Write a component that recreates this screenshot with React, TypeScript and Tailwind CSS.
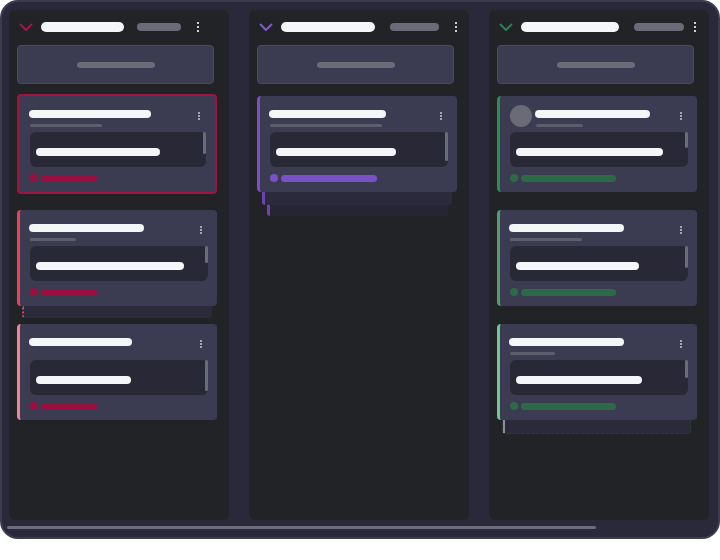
import React from "react";

type CardSpec = {
  accent: string;
  title: number;
  sub?: number;
  body: number;
  thumb: number;
  badge: number;
  badgeColor: string;
  avatar?: boolean;
  selected?: boolean;
  stack?: React.ReactNode;
};

function Dots({ color, gap }: { color: string; gap: string }) {
  return (
    <div className={`flex flex-col ${gap}`}>
      <span className={`block h-[2px] w-[2px] ${color}`} />
      <span className={`block h-[2px] w-[2px] ${color}`} />
      <span className={`block h-[2px] w-[2px] ${color}`} />
    </div>
  );
}

function Card({ c }: { c: CardSpec }) {
  return (
    <div
      className={`relative w-[200px] rounded-[4px] bg-[#3b3b52] pl-[10px] pr-[9px] pt-[14px] pb-[10px] ${
        c.selected ? "-my-[2px] border-2 border-l-[3px]" : "border-l-[3px]"
      } ${c.accent}`}
    >
      {c.stack}
      <div className="flex items-start">
        {c.avatar && (
          <div className="-mt-[5px] mr-[4px] h-[22px] w-[22px] shrink-0 rounded-full bg-[#6b6b78]" />
        )}
        <div className="flex flex-col">
          <div
            className="-ml-px h-[8px] rounded-full bg-[#f5f6f8]"
            style={{ width: c.title }}
          />
          <div
            className={`mt-[6px] h-[3px] rounded-full ${c.sub ? "bg-[#5d5e6d]" : "bg-transparent"}`}
            style={{ width: c.sub ?? 10 }}
          />
        </div>
        <div className="ml-auto mr-[6px] mt-[2px]">
          <Dots color="bg-[#a3a5b3]" gap="gap-px" />
        </div>
      </div>
      <div className="mt-[5px] flex h-[35px] rounded-md bg-[#282837]">
        <div className="flex-1 pl-[6px] pt-[16px]">
          <div className="h-[8px] rounded-full bg-[#f5f6f8]" style={{ width: c.body }} />
        </div>
        <div className="w-[3px] rounded-sm bg-[#686d7a]" style={{ height: c.thumb }} />
      </div>
      <div className="mt-[7px] flex items-center gap-[3px]">
        <span className={`block h-[8px] w-[8px] rounded-full ${c.badgeColor}`} />
        <span className={`block h-[7px] rounded-full ${c.badgeColor}`} style={{ width: c.badge }} />
      </div>
    </div>
  );
}

function Column({
  chevron,
  titleW,
  countW,
  countMl,
  dotsMl,
  cards,
}: {
  chevron: string;
  titleW: number;
  countW: number;
  countMl: string;
  dotsMl: string;
  cards: CardSpec[];
}) {
  return (
    <div className="flex h-[510px] w-[220px] shrink-0 flex-col rounded-[6px] bg-[#222327] pt-[12px] pl-[8px]">
      <div className="flex h-[10px] items-center pl-[2px]">
        <svg width="14" height="8" viewBox="0 0 14 8" className={chevron}>
          <polyline points="1,1 7,7 13,1" fill="none" stroke="currentColor" strokeWidth="2" />
        </svg>
        <div className="ml-[8px] h-[10px] rounded-full bg-[#f5f6f8]" style={{ width: titleW }} />
        <div className={`h-[8px] rounded-full bg-[#6b6b77] ${countMl}`} style={{ width: countW }} />
        <div className={dotsMl}>
          <Dots color="bg-[#cfd1d9]" gap="gap-[2px]" />
        </div>
      </div>
      <div className="mt-[13px] flex h-[39px] w-[197px] items-center justify-center rounded-[4px] border border-[#4b4c63] bg-[#3b3b52]">
        <div className="h-[6px] w-[78px] rounded-full bg-[#6b6b77]" />
      </div>
      <div className="mt-[12px] flex flex-col gap-[18px]">
        {cards.map((c, i) => (
          <Card key={i} c={c} />
        ))}
      </div>
    </div>
  );
}

const red = "bg-[#99103f]";
const purple = "bg-[#7a50c5]";
const green = "bg-[#2c6a47]";

const col1: CardSpec[] = [
  { accent: "border-[#a0123f]", title: 122, sub: 72, body: 124, thumb: 22, badge: 56, badgeColor: red, selected: true },
  {
    accent: "border-[#ee3f5c]",
    title: 115,
    sub: 46,
    body: 148,
    thumb: 17,
    badge: 56,
    badgeColor: red,
    stack: (
      <div className="absolute left-[2px] right-[5px] top-full h-[12px] rounded-b-[3px] border-l-2 border-dotted border-[#c04a64] bg-[#2b2b3c]" />
    ),
  },
  { accent: "border-[#f08498]", title: 103, body: 95, thumb: 31, badge: 56, badgeColor: red },
];

const col2: CardSpec[] = [
  {
    accent: "border-[#7c4fc9]",
    title: 117,
    sub: 112,
    body: 120,
    thumb: 29,
    badge: 96,
    badgeColor: purple,
    stack: (
      <>
        <div className="absolute left-[2px] right-[5px] top-full h-[13px] rounded-b-[3px] border-l-[3px] border-[#6a45b0] bg-[#2b2a3c]" />
        <div className="absolute left-[7px] right-[9px] top-[calc(100%+13px)] h-[11px] rounded-b-[3px] border-l-[3px] border-[#6a45b0] bg-[#262534]" />
      </>
    ),
  },
];

const col3: CardSpec[] = [
  { accent: "border-[#2f8a55]", title: 115, sub: 47, body: 147, thumb: 16, badge: 95, badgeColor: green, avatar: true },
  { accent: "border-[#579d72]", title: 115, sub: 72, body: 123, thumb: 22, badge: 95, badgeColor: green },
  {
    accent: "border-[#72c796]",
    title: 115,
    sub: 45,
    body: 126,
    thumb: 18,
    badge: 95,
    badgeColor: green,
    stack: (
      <div className="absolute left-[2px] right-[6px] top-full flex h-[14px] rounded-b-[3px] border border-t-0 border-dashed border-[#273f33] bg-[#2a2a3a]">
        <div className="h-full w-[2px] bg-[#8d8d9a]" />
      </div>
    ),
  },
];

export default function App() {
  return (
    <div className="h-[560px] w-[720px] bg-white" style={{ fontFamily: '"Liberation Sans", sans-serif' }}>
      <div className="flex h-[539px] w-[720px] flex-col rounded-[18px] border-2 border-[#3c3c4f] bg-[#29293a] pl-[7px] pt-[8px]">
        <div className="flex gap-[20px]">
          <Column chevron="text-[#a0174a]" titleW={83} countW={44} countMl="ml-[13px]" dotsMl="ml-[16px]" cards={col1} />
          <Column chevron="text-[#7d5bc9]" titleW={94} countW={49} countMl="ml-[15px]" dotsMl="ml-[16px]" cards={col2} />
          <Column chevron="text-[#2e7d55]" titleW={98} countW={50} countMl="ml-[15px]" dotsMl="ml-[10px]" cards={col3} />
        </div>
        <div className="ml-[-2px] mt-[6px] h-[3px] w-[589px] rounded-full bg-[#6c6c7e]" />
      </div>
    </div>
  );
}
